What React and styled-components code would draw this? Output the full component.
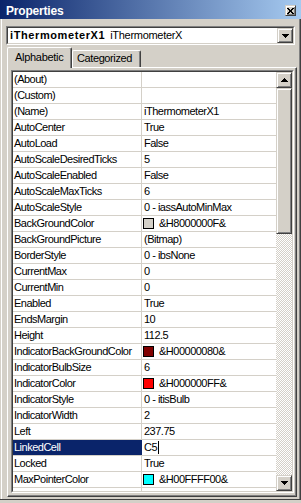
import React from 'react';
import styled, { createGlobalStyle, css } from 'styled-components';

const Global = createGlobalStyle`
  html, body { margin: 0; padding: 0; background: #D4D0C8; }
  body { font-family: "Liberation Sans", Arial, sans-serif; }
`;

const raised = css`
  box-sizing: border-box;
  background: #D4D0C8;
  border: 1px solid;
  border-color: #D4D0C8 #404040 #404040 #D4D0C8;
  box-shadow: inset 1px 1px #fff, inset -1px -1px #808080;
`;

const Window = styled.div`
  width: 301px;
  height: 503px;
  background: #D4D0C8;
  display: flex;
  flex-direction: column;
  overflow: hidden;
  font-family: "Liberation Sans", Arial, sans-serif;
  font-size: 11px;
  color: #000;
`;

const TitleBar = styled.div`
  height: 19px;
  flex: none;
  box-sizing: border-box;
  padding: 2px 5px 0 6px;
  display: flex;
  align-items: center;
  justify-content: space-between;
  background: linear-gradient(to right, #0A246A, #A6CAF0);
`;

const Title = styled.span`
  color: #fff;
  font-weight: bold;
  font-size: 12px;
  letter-spacing: -0.2px;
`;

const CloseButton = styled.div`
  ${raised};
  width: 11px;
  height: 11px;
  display: flex;
  align-items: center;
  justify-content: center;
`;

const Body = styled.div`
  flex: 1;
  display: flex;
  flex-direction: column;
  padding: 7px 6px 2px 6px;
  box-shadow: inset 1px 0 #D4D0C8, inset 2px 0 #fff, inset -1px 0 #404040, inset -2px 0 #808080;
`;

const Footer = styled.div`
  height: 4px;
  flex: none;
  box-sizing: border-box;
  border-top: 1px solid #404040;
`;

const Combo = styled.div`
  height: 19px;
  flex: none;
  box-sizing: border-box;
  border: 1px solid;
  border-color: #808080 #fff #fff #808080;
`;

const ComboInner = styled.div`
  height: 100%;
  box-sizing: border-box;
  border: 1px solid;
  border-color: #404040 #D4D0C8 #D4D0C8 #404040;
  background: #fff;
  display: flex;
  align-items: center;
`;

const ComboText = styled.div`
  flex: 1;
  padding-left: 2px;
  white-space: nowrap;
  line-height: 15px;
`;

const ObjName = styled.span`
  font-weight: bold;
  letter-spacing: 0.6px;
  margin-right: 5px;
`;

const ObjType = styled.span`
  letter-spacing: -0.3px;
`;

const DropButton = styled.div`
  ${raised};
  width: 16px;
  height: 15px;
  display: flex;
  align-items: center;
  justify-content: center;
`;

const Tabs = styled.div`
  flex: 1;
  display: flex;
  flex-direction: column;
  margin: 2px -2px 0 1px;
`;

const TabStrip = styled.div`
  height: 20px;
  flex: none;
  display: flex;
  align-items: flex-end;
`;

const Tab = styled.div`
  box-sizing: border-box;
  background: #D4D0C8;
  border-top: 1px solid #fff;
  border-left: 1px solid #fff;
  border-right: 1px solid #404040;
  box-shadow: inset -1px 0 #808080;
  border-top-left-radius: 2px;
  border-top-right-radius: 2px;
  line-height: 15px;
  letter-spacing: ${p => (p.$active ? '-0.3px' : '-0.4px')};
  white-space: nowrap;
  ${p =>
    p.$active
      ? css`
          position: relative;
          z-index: 1;
          width: 65px;
          height: 21px;
          margin-bottom: -1px;
          padding: 2px 0 0 7px;
        `
      : css`
          width: 69px;
          height: 17px;
          padding: 0 0 0 4px;
        `}
`;

const Panel = styled.div`
  flex: 1;
  display: flex;
  box-sizing: border-box;
  border: 1px solid;
  border-color: #fff #404040 #404040 #fff;
  box-shadow: inset -1px -1px #808080;
  padding: 2px 2px 2px 3px;
`;

const Grid = styled.div`
  height: 423px;
  flex: 1;
  box-sizing: border-box;
  border: 1px solid;
  border-color: #808080 #fff #fff #808080;
`;

const GridInner = styled.div`
  height: 100%;
  box-sizing: border-box;
  border: 1px solid;
  border-color: #404040 #D4D0C8 #D4D0C8 #404040;
  display: flex;
  background: #fff;
`;

const List = styled.div`
  flex: 1;
  overflow: hidden;
  display: flex;
  flex-direction: column;
`;

const Row = styled.div`
  height: 16px;
  flex: none;
  box-sizing: border-box;
  border-bottom: 1px solid #D4D0C8;
  display: flex;
  line-height: 15px;
  white-space: nowrap;
  letter-spacing: -0.5px;
`;

const NameCell = styled.div`
  width: 129px;
  flex: none;
  padding-left: 1px;
  box-sizing: border-box;
  border-right: 1px solid ${p => (p.$selected ? '#0A246A' : '#D4D0C8')};
  background: ${p => (p.$selected ? '#0A246A' : 'transparent')};
  color: ${p => (p.$selected ? '#fff' : '#000')};
  overflow: hidden;
`;

const ValueCell = styled.div`
  flex: 1;
  padding-left: 2px;
  display: flex;
  align-items: center;
  overflow: hidden;
`;

const Swatch = styled.span`
  width: 11px;
  height: 11px;
  box-sizing: border-box;
  border: 1px solid #000;
  margin: 0 5px 0 -1px;
  flex: none;
  background: ${p => p.$color};
`;

const Caret = styled.span`
  width: 1px;
  height: 13px;
  background: #000;
  margin-left: 1px;
`;

const ScrollBar = styled.div`
  width: 16px;
  flex: none;
  display: flex;
  flex-direction: column;
`;

const ArrowButton = styled.div`
  ${raised};
  width: 16px;
  height: 16px;
  flex: none;
  display: flex;
  align-items: center;
  justify-content: center;
`;

const Thumb = styled.div`
  ${raised};
  height: 146px;
  flex: none;
`;

const Track = styled.div`
  flex: 1;
  background-color: #fff;
  background-image: repeating-conic-gradient(#D4D0C8 0 25%, #fff 0 50%);
  background-size: 2px 2px;
`;

const ArrowUp = () => (
  <svg width="7" height="4" viewBox="0 0 7 4" shapeRendering="crispEdges">
    <rect x="3" y="0" width="1" height="1" fill="#000" />
    <rect x="2" y="1" width="3" height="1" fill="#000" />
    <rect x="1" y="2" width="5" height="1" fill="#000" />
    <rect x="0" y="3" width="7" height="1" fill="#000" />
  </svg>
);

const ArrowDown = () => (
  <svg width="7" height="4" viewBox="0 0 7 4" shapeRendering="crispEdges">
    <rect x="0" y="0" width="7" height="1" fill="#000" />
    <rect x="1" y="1" width="5" height="1" fill="#000" />
    <rect x="2" y="2" width="3" height="1" fill="#000" />
    <rect x="3" y="3" width="1" height="1" fill="#000" />
  </svg>
);

const CloseGlyph = () => (
  <svg width="7" height="6" viewBox="0 0 7 6" shapeRendering="crispEdges">
    {[0, 1, 2, 3, 4, 5].map(i => (
      <React.Fragment key={i}>
        <rect x={i} y={i} width="2" height="1" fill="#000" />
        <rect x={5 - i} y={i} width="2" height="1" fill="#000" />
      </React.Fragment>
    ))}
  </svg>
);

const rows = [
  { name: '(About)', value: '' },
  { name: '(Custom)', value: '' },
  { name: '(Name)', value: 'iThermometerX1' },
  { name: 'AutoCenter', value: 'True' },
  { name: 'AutoLoad', value: 'False' },
  { name: 'AutoScaleDesiredTicks', value: '5' },
  { name: 'AutoScaleEnabled', value: 'False' },
  { name: 'AutoScaleMaxTicks', value: '6' },
  { name: 'AutoScaleStyle', value: '0 - iassAutoMinMax' },
  { name: 'BackGroundColor', value: '&H8000000F&', color: '#D4D0C8' },
  { name: 'BackGroundPicture', value: '(Bitmap)' },
  { name: 'BorderStyle', value: '0 - ibsNone' },
  { name: 'CurrentMax', value: '0' },
  { name: 'CurrentMin', value: '0' },
  { name: 'Enabled', value: 'True' },
  { name: 'EndsMargin', value: '10' },
  { name: 'Height', value: '112.5' },
  { name: 'IndicatorBackGroundColor', value: '&H00000080&', color: '#800000' },
  { name: 'IndicatorBulbSize', value: '6' },
  { name: 'IndicatorColor', value: '&H000000FF&', color: '#FF0000' },
  { name: 'IndicatorStyle', value: '0 - itisBulb' },
  { name: 'IndicatorWidth', value: '2' },
  { name: 'Left', value: '237.75' },
  { name: 'LinkedCell', value: 'C5', selected: true },
  { name: 'Locked', value: 'True' },
  { name: 'MaxPointerColor', value: '&H00FFFF00&', color: '#00FFFF' },
  { name: 'MaxPointerMargin', value: '1' },
];

export default function App() {
  return (
    <>
      <Global />
      <Window>
        <TitleBar>
          <Title>Properties</Title>
          <CloseButton>
            <CloseGlyph />
          </CloseButton>
        </TitleBar>
        <Body>
          <Combo>
            <ComboInner>
              <ComboText>
                <ObjName>iThermometerX1</ObjName>
                <ObjType>iThermometerX</ObjType>
              </ComboText>
              <DropButton>
                <ArrowDown />
              </DropButton>
            </ComboInner>
          </Combo>
          <Tabs>
            <TabStrip>
              <Tab $active>Alphabetic</Tab>
              <Tab>Categorized</Tab>
            </TabStrip>
            <Panel>
              <Grid>
                <GridInner>
                  <List>
                    {rows.map(r => (
                      <Row key={r.name}>
                        <NameCell $selected={r.selected}>{r.name}</NameCell>
                        <ValueCell>
                          {r.color && <Swatch $color={r.color} />}
                          {r.value}
                          {r.selected && <Caret />}
                        </ValueCell>
                      </Row>
                    ))}
                  </List>
                  <ScrollBar>
                    <ArrowButton>
                      <ArrowUp />
                    </ArrowButton>
                    <Thumb />
                    <Track />
                    <ArrowButton>
                      <ArrowDown />
                    </ArrowButton>
                  </ScrollBar>
                </GridInner>
              </Grid>
            </Panel>
          </Tabs>
        </Body>
        <Footer />
      </Window>
    </>
  );
}
